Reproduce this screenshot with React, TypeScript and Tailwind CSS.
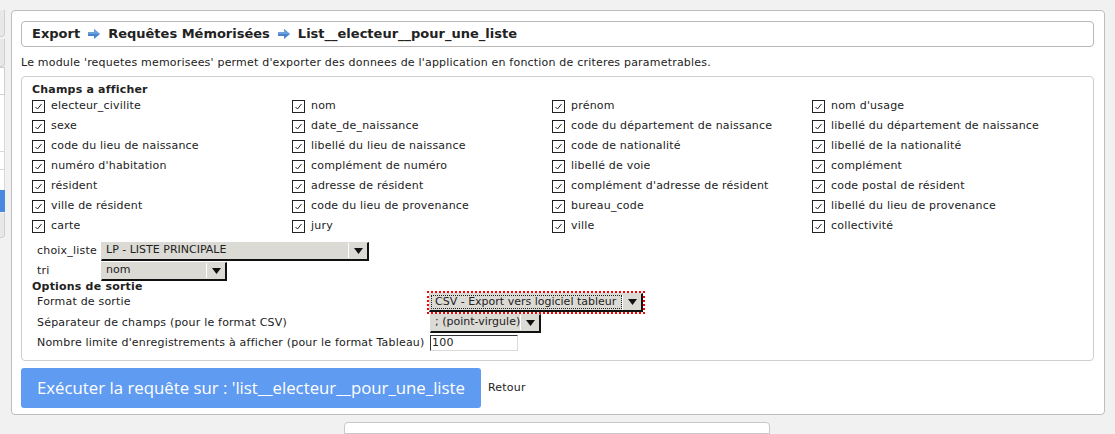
import React from "react";

const fields = [
  ["electeur_civilite", "nom", "prénom", "nom d'usage"],
  ["sexe", "date_de_naissance", "code du département de naissance", "libellé du département de naissance"],
  ["code du lieu de naissance", "libellé du lieu de naissance", "code de nationalité", "libellé de la nationalité"],
  ["numéro d'habitation", "complément de numéro", "libellé de voie", "complément"],
  ["résident", "adresse de résident", "complément d'adresse de résident", "code postal de résident"],
  ["ville de résident", "code du lieu de provenance", "bureau_code", "libellé du lieu de provenance"],
  ["carte", "jury", "ville", "collectivité"],
];

function Arrow() {
  return (
    <svg width="12" height="10" viewBox="0 0 12 10" className="mx-[8px]">
      <path d="M0 3 H6 V0 L12 5 L6 10 V7 H0 Z" fill="#4a84cc" />
      <path d="M0 3 H6 V0 L12 5 H0 Z" fill="#6a9fdc" />
    </svg>
  );
}

function Check({ label }: { label: string }) {
  return (
    <div className="flex items-center h-[20px]">
      <div className="w-[13px] h-[13px] border border-[#222] bg-white flex items-center justify-center">
        <svg width="11" height="11" viewBox="0 0 11 11">
          <path d="M2.5 6 L4.5 8 L8.5 3" stroke="#222" strokeWidth="1" fill="none" />
        </svg>
      </div>
      <span className="ml-[6px] text-[#222]">{label}</span>
    </div>
  );
}

function Select({ value, width, focus }: { value: string; width: number; focus?: boolean }) {
  return (
    <div
      className="flex items-center h-[19px] bg-[#dcdad5] border-t border-l border-[#dcdad5] border-r-2 border-b-2 border-r-[#111] border-b-[#111] tracking-normal"
      style={{ width }}
    >
      <div
        className={`flex-1 min-w-0 flex items-center overflow-hidden whitespace-nowrap ${
          focus ? "border border-dotted border-[#222] ml-[1px] h-[14px] pl-[3px]" : "h-full pl-[4px]"
        }`}
      >
        {value}
      </div>
      <div className="w-px h-[15px] bg-[#9a9893] border-r border-white" />
      <div className="w-[18px] flex items-center justify-center">
        <svg width="9" height="6" viewBox="0 0 9 6">
          <path d="M0 0 H9 L4.5 6 Z" fill="#111" />
        </svg>
      </div>
    </div>
  );
}

export default function App() {
  return (
    <div className="w-[1115px] h-[434px] overflow-hidden bg-[#f1f1f1] flex font-['DejaVu_Sans',sans-serif] text-[11px] tracking-[0.2px] text-[#222]">
      {/* bout du menu latéral */}
      <div className="w-[5px] pt-[10px] flex flex-col">
        <div className="h-[27px] bg-[#e8e8e8] border-r border-b border-[#cfcfcf] rounded-br" />
        <div className="h-[28px] mt-[2px] bg-[#e8e8e8] border-r border-b border-[#cfcfcf] rounded-br" />
        <div className="h-[28px] bg-white border-r border-t border-b border-[#cfcfcf]" />
        <div className="h-[57px] bg-white border-r border-b border-[#d8d8d8]" />
        <div className="h-[18px] bg-white border-r border-b border-[#d8d8d8]" />
        <div className="h-[20px] bg-white border-r border-[#d8d8d8]" />
        <div className="h-[22px] bg-[#4a88e0]" />
        <div className="h-[25px] mt-[1px] bg-[#e8e8e8] border-r border-b border-[#cfcfcf] rounded-br" />
      </div>

      <div className="ml-[6px] flex flex-col">
        <div className="mt-[10px] w-[1094px] h-[414px] bg-white border border-[#bdbdbd] rounded-[4px] pl-[9px] pr-[10px] pt-[10px]">
          <div className="h-[26px] border border-[#b8b8b8] rounded-[4px] flex items-center pl-[10px] font-bold text-[13px] tracking-normal text-[#222]">
            <span>Export</span>
            <Arrow />
            <span>Requêtes Mémorisées</span>
            <Arrow />
            <span>List__electeur__pour_une_liste</span>
          </div>

          <p className="mt-[9px] leading-[14px]">
            Le module 'requetes memorisees' permet d'exporter des donnees de l'application en fonction de criteres parametrables.
          </p>

          <div className="mt-[6px] h-[285px] border border-[#cfcfcf] rounded-[4px] pl-[10px] pt-[7px]">
            <div className="font-bold leading-[12px]">Champs a afficher</div>
            <div className="grid grid-cols-[260px_260px_260px_260px]">
              {fields.flat().map((f) => (
                <Check key={f} label={f} />
              ))}
            </div>

            <div className="pl-[5px] mt-[5px]">
              <div className="flex items-center h-[20px]">
                <span className="w-[64px]">choix_liste</span>
                <Select value="LP - LISTE PRINCIPALE" width={268} />
              </div>
              <div className="flex items-center h-[20px]">
                <span className="w-[64px]">tri</span>
                <Select value="nom" width={126} />
              </div>
            </div>

            <div className="font-bold leading-[11px]">Options de sortie</div>

            <div className="pl-[5px]">
              <div className="flex items-center h-[21px]">
                <span className="w-[390px]">Format de sortie</span>
                <div className="border-2 border-dotted border-[#ff0000]">
                  <Select value="CSV - Export vers logiciel tableur" width={214} focus />
                </div>
              </div>
              <div className="flex items-center h-[20px]">
                <span className="w-[393px]">Séparateur de champs (pour le format CSV)</span>
                <Select value="; (point-virgule)" width={111} />
              </div>
              <div className="flex items-center h-[20px]">
                <span className="w-[393px]">Nombre limite d'enregistrements à afficher (pour le format Tableau)</span>
                <div className="w-[88px] h-[16px] bg-white border border-t-[#333] border-l-[#333] border-r-[#dadada] border-b-[#dadada] flex items-center pl-px">
                  100
                </div>
              </div>
            </div>
          </div>

          <div className="mt-[7px] flex items-center">
            <div className="w-[460px] h-[40px] bg-[#5f9bf1] rounded-[3px] flex items-center pl-[16px] text-white text-[16.8px] tracking-normal font-['Open_Sans',sans-serif] whitespace-nowrap">
              Exécuter la requête sur : 'list__electeur__pour_une_liste
            </div>
            <span className="ml-[7px]">Retour</span>
          </div>
        </div>

        <div className="ml-[333px] mt-[7px] w-[426px] h-[12px] bg-white border border-[#c8c8c8] rounded-t-[4px]" />
      </div>
    </div>
  );
}
